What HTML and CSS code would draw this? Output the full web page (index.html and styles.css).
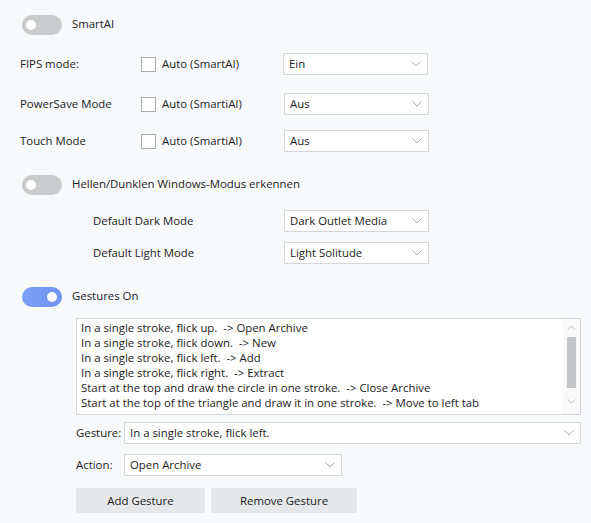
FILE: index.html
```html
<!DOCTYPE html>
<html>
<head>
<meta charset="utf-8">
<link rel="stylesheet" href="styles.css">
</head>
<body>
<div class="page">
  <div class="toggle-row r-smart">
    <span class="toggle off"><span class="knob"></span></span>
    <span class="toggle-label">SmartAI</span>
  </div>

  <div class="opt-row r-fips">
    <span class="opt-label">FIPS mode:</span>
    <span class="check"></span>
    <span class="auto">Auto (SmartAI)</span>
    <div class="select"><span>Ein</span><svg class="chev" viewBox="0 0 10 6"><polyline points="0.5,0.5 5,5 9.5,0.5"/></svg></div>
  </div>

  <div class="opt-row r-power">
    <span class="opt-label">PowerSave Mode</span>
    <span class="check"></span>
    <span class="auto">Auto (SmartiAI)</span>
    <div class="select s2"><span>Aus</span><svg class="chev" viewBox="0 0 10 6"><polyline points="0.5,0.5 5,5 9.5,0.5"/></svg></div>
  </div>

  <div class="opt-row r-touch">
    <span class="opt-label">Touch Mode</span>
    <span class="check"></span>
    <span class="auto">Auto (SmartiAI)</span>
    <div class="select s2"><span>Aus</span><svg class="chev" viewBox="0 0 10 6"><polyline points="0.5,0.5 5,5 9.5,0.5"/></svg></div>
  </div>

  <div class="toggle-row r-hellen">
    <span class="toggle off"><span class="knob"></span></span>
    <span class="toggle-label">Hellen/Dunklen Windows-Modus erkennen</span>
  </div>

  <div class="mode-row r-dark">
    <span class="mode-label">Default Dark Mode</span>
    <div class="select s2"><span>Dark Outlet Media</span><svg class="chev" viewBox="0 0 10 6"><polyline points="0.5,0.5 5,5 9.5,0.5"/></svg></div>
  </div>

  <div class="mode-row r-light">
    <span class="mode-label">Default Light Mode</span>
    <div class="select s2"><span>Light Solitude</span><svg class="chev" viewBox="0 0 10 6"><polyline points="0.5,0.5 5,5 9.5,0.5"/></svg></div>
  </div>

  <div class="toggle-row r-gest">
    <span class="toggle on"><span class="knob"></span></span>
    <span class="toggle-label">Gestures On</span>
  </div>

  <div class="gesture-area">
    <div class="listbox">
      <div class="list-items">
        <div>In a single stroke, flick up.&nbsp; -&gt; Open Archive</div>
        <div>In a single stroke, flick down.&nbsp; -&gt; New</div>
        <div>In a single stroke, flick left.&nbsp; -&gt; Add</div>
        <div>In a single stroke, flick right.&nbsp; -&gt; Extract</div>
        <div>Start at the top and draw the circle in one stroke.&nbsp; -&gt; Close Archive</div>
        <div>Start at the top of the triangle and draw it in one stroke.&nbsp; -&gt; Move to left tab</div>
      </div>
      <div class="scrollbar">
        <svg class="sb-arrow" viewBox="0 0 10 6"><polyline points="0.5,5.5 5,1 9.5,5.5"/></svg>
        <div class="sb-thumb"></div>
        <svg class="sb-arrow" viewBox="0 0 10 6"><polyline points="0.5,0.5 5,5 9.5,0.5"/></svg>
      </div>
    </div>

    <div class="field-row r-gfield">
      <span class="field-label">Gesture:</span>
      <div class="select wide"><span>In a single stroke, flick left.</span><svg class="chev" viewBox="0 0 10 6"><polyline points="0.5,0.5 5,5 9.5,0.5"/></svg></div>
    </div>

    <div class="field-row r-afield">
      <span class="field-label">Action:</span>
      <div class="select action"><span>Open Archive</span><svg class="chev" viewBox="0 0 10 6"><polyline points="0.5,0.5 5,5 9.5,0.5"/></svg></div>
    </div>

    <div class="buttons">
      <button class="btn add">Add Gesture</button>
      <button class="btn remove">Remove Gesture</button>
    </div>
  </div>
</div>
</body>
</html>
```
FILE: styles.css
```css
html, body {
  margin: 0;
  padding: 0;
  background: #f8f9fb;
}
body {
  width: 591px;
  height: 523px;
  overflow: hidden;
  font-family: "Open Sans", "Noto Sans", "Liberation Sans", sans-serif;
  font-size: 11.4px;
  color: #1b1b1b;
}
.page {
  display: flex;
  flex-direction: column;
  padding: 15px 0 0 20px;
}

/* toggles */
.toggle-row {
  display: flex;
  align-items: center;
  height: 20px;
  margin-left: 2px;
}
.toggle {
  position: relative;
  width: 40px;
  height: 20px;
  border-radius: 10px;
  flex: none;
}
.toggle.off { background: #c9cbcd; }
.toggle.on { background: linear-gradient(90deg, #7d9ff5, #6f93f2); }
.knob {
  position: absolute;
  top: 5px;
  width: 10px;
  height: 10px;
  border-radius: 50%;
  background: #ffffff;
}
.toggle.off .knob { left: 4px; }
.toggle.on .knob { left: 25px; }
.toggle-label {
  margin-left: 10px;
  line-height: 18px;
  padding-bottom: 2px;
}

/* option rows */
.opt-row {
  display: flex;
  align-items: center;
  height: 22px;
  line-height: 18px;
}
.r-fips { margin-top: 18px; }
.r-power { margin-top: 18px; }
.r-touch { margin-top: 15px; }
.opt-label {
  width: 121px;
  flex: none;
  padding-bottom: 1px;
}
.check {
  width: 13px;
  height: 13px;
  border: 1px solid #a9adb2;
  background: #ffffff;
  flex: none;
}
.auto {
  margin-left: 6px;
  width: 121px;
  flex: none;
  padding-bottom: 1px;
}
.select {
  display: flex;
  align-items: center;
  justify-content: space-between;
  box-sizing: border-box;
  width: 145px;
  height: 22px;
  border: 1px solid #d3d6da;
  background: #ffffff;
  padding: 0 6px 0 5px;
}
.select span { padding-bottom: 1px; }
.select.s2 { margin-left: 1px; }
.chev {
  width: 10px;
  height: 6px;
  fill: none;
  stroke: #a9adb1;
  stroke-width: 1;
  flex: none;
}

.r-hellen { margin-top: 23px; }

.mode-row {
  display: flex;
  align-items: center;
  padding-left: 73px;
  height: 23px;
}
.mode-label { width: 190px; flex: none; padding-bottom: 1px; }
.r-dark { margin-top: 14px; }
.r-light { margin-top: 9px; }

.r-gest { margin-top: 23px; }

/* gestures */
.gesture-area {
  display: flex;
  flex-direction: column;
  margin-left: 56px;
  margin-top: 11px;
}
.listbox {
  display: flex;
  box-sizing: border-box;
  width: 505px;
  height: 97px;
  border: 1px solid #d3d6da;
  background: #ffffff;
}
.list-items {
  flex: 1;
  padding: 1px 0 0 4px;
  line-height: 15px;
  white-space: nowrap;
  overflow: hidden;
}
.scrollbar {
  width: 17px;
  display: flex;
  flex-direction: column;
  align-items: center;
  background: #f9f9f9;
  padding-top: 6px;
}
.sb-arrow {
  width: 9px;
  height: 5px;
  fill: none;
  stroke: #b4b7ba;
  stroke-width: 1;
}
.sb-thumb {
  width: 9px;
  height: 51px;
  background: #c4c6c8;
  margin: 7px 0 11px 0;
}

.field-row {
  display: flex;
  align-items: center;
  height: 22px;
}
.r-gfield { margin-top: 7px; }
.r-afield { margin-top: 10px; }
.field-label { width: 48px; flex: none; padding-bottom: 1px; }
.select.wide { width: 457px; }
.select.action { width: 218px; }

.buttons {
  display: flex;
  gap: 6px;
  margin-top: 12px;
}
.btn {
  height: 25px;
  border: none;
  background: #e5e7e9;
  font-family: inherit;
  font-size: inherit;
  color: #1b1b1b;
  padding: 0 0 1px 0;
}
.btn.add { width: 129px; }
.btn.remove { width: 146px; }
```
